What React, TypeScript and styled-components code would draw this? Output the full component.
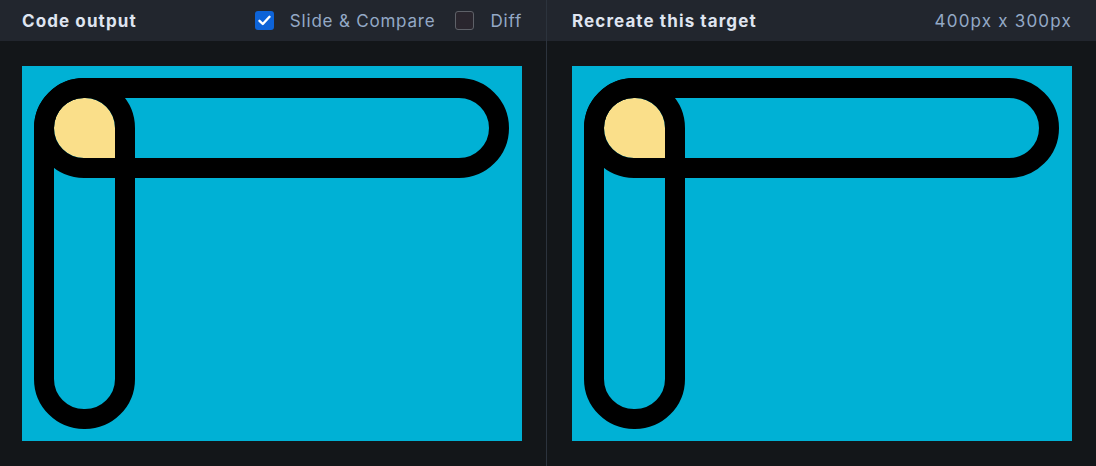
import React from "react";
import styled, { createGlobalStyle } from "styled-components";

const GlobalStyle = createGlobalStyle`
  html, body { margin: 0; padding: 0; background: #131619; }
  body { font-family: Inter, "Noto Sans", sans-serif; }
`;

const Layout = styled.div`
  display: flex;
  width: 1096px;
  height: 466px;
  background: #131619;
  overflow: hidden;
`;

const Pane = styled.div<{ $width?: number }>`
  display: flex;
  flex-direction: column;
  ${(p) => (p.$width ? `width: ${p.$width}px; flex: none;` : "flex: 1;")}
`;

const Divider = styled.div`
  width: 1px;
  flex: none;
  background: #2c333d;
`;

const Header = styled.div<{ $padLeft: number }>`
  height: 41px;
  flex: none;
  display: flex;
  align-items: center;
  padding: 0 24px 0 ${(p) => p.$padLeft}px;
  background: #22262e;
  box-sizing: border-box;
`;

const Title = styled.div`
  font-size: 17px;
  font-weight: 700;
  color: #dfe4f0;
  letter-spacing: 1.1px;
  margin-right: auto;
`;

const Label = styled.span<{ $wide?: boolean }>`
  font-size: 17px;
  color: #94a9c6;
  letter-spacing: ${(p) => (p.$wide ? "1.2px" : "0.8px")};
`;

const Check = styled.span<{ $on?: boolean }>`
  width: 19px;
  height: 19px;
  box-sizing: border-box;
  border-radius: 3px;
  display: inline-flex;
  align-items: center;
  justify-content: center;
  margin-right: 16px;
  background: ${(p) => (p.$on ? "#0d63d8" : "#2a262e")};
  border: ${(p) => (p.$on ? "none" : "1px solid #5e6168")};
`;

const Option = styled.div`
  display: flex;
  align-items: center;
  & + & { margin-left: 20px; }
`;

const Body = styled.div<{ $padLeft: number }>`
  flex: 1;
  padding: 25px 0 0 ${(p) => p.$padLeft}px;
`;

const Canvas = styled.div`
  position: relative;
  width: 500px;
  height: 375px;
  background: #00b1d5;
  overflow: hidden;
`;

const Pill = styled.div<{ $w: number; $h: number }>`
  position: absolute;
  left: 12px;
  top: 12px;
  width: ${(p) => p.$w}px;
  height: ${(p) => p.$h}px;
  box-sizing: border-box;
  border: 20px solid #000;
  border-radius: 50px;
`;

const Drop = styled.div`
  position: absolute;
  left: 32px;
  top: 32px;
  width: 61px;
  height: 60px;
  background: #fadf8a;
  border-radius: 30px 30px 0 30px;
`;

const Target = () => (
  <Canvas>
    <Drop />
    <Pill $w={475} $h={100} />
    <Pill $w={101} $h={351} />
  </Canvas>
);

export default function App() {
  return (
    <>
      <GlobalStyle />
      <Layout>
        <Pane $width={546}>
          <Header $padLeft={22}>
            <Title>Code output</Title>
            <Option>
              <Check $on>
                <svg width="13" height="11" viewBox="0 0 13 11" fill="none">
                  <path d="M1.5 5.8 L4.8 9 L11.5 1.8" stroke="#fff" strokeWidth="2.4" strokeLinecap="round" strokeLinejoin="round" />
                </svg>
              </Check>
              <Label>Slide &amp; Compare</Label>
            </Option>
            <Option>
              <Check />
              <Label>Diff</Label>
            </Option>
          </Header>
          <Body $padLeft={22}>
            <Target />
          </Body>
        </Pane>
        <Divider />
        <Pane>
          <Header $padLeft={25}>
            <Title>Recreate this target</Title>
            <Label $wide>400px x 300px</Label>
          </Header>
          <Body $padLeft={25}>
            <Target />
          </Body>
        </Pane>
      </Layout>
    </>
  );
}
